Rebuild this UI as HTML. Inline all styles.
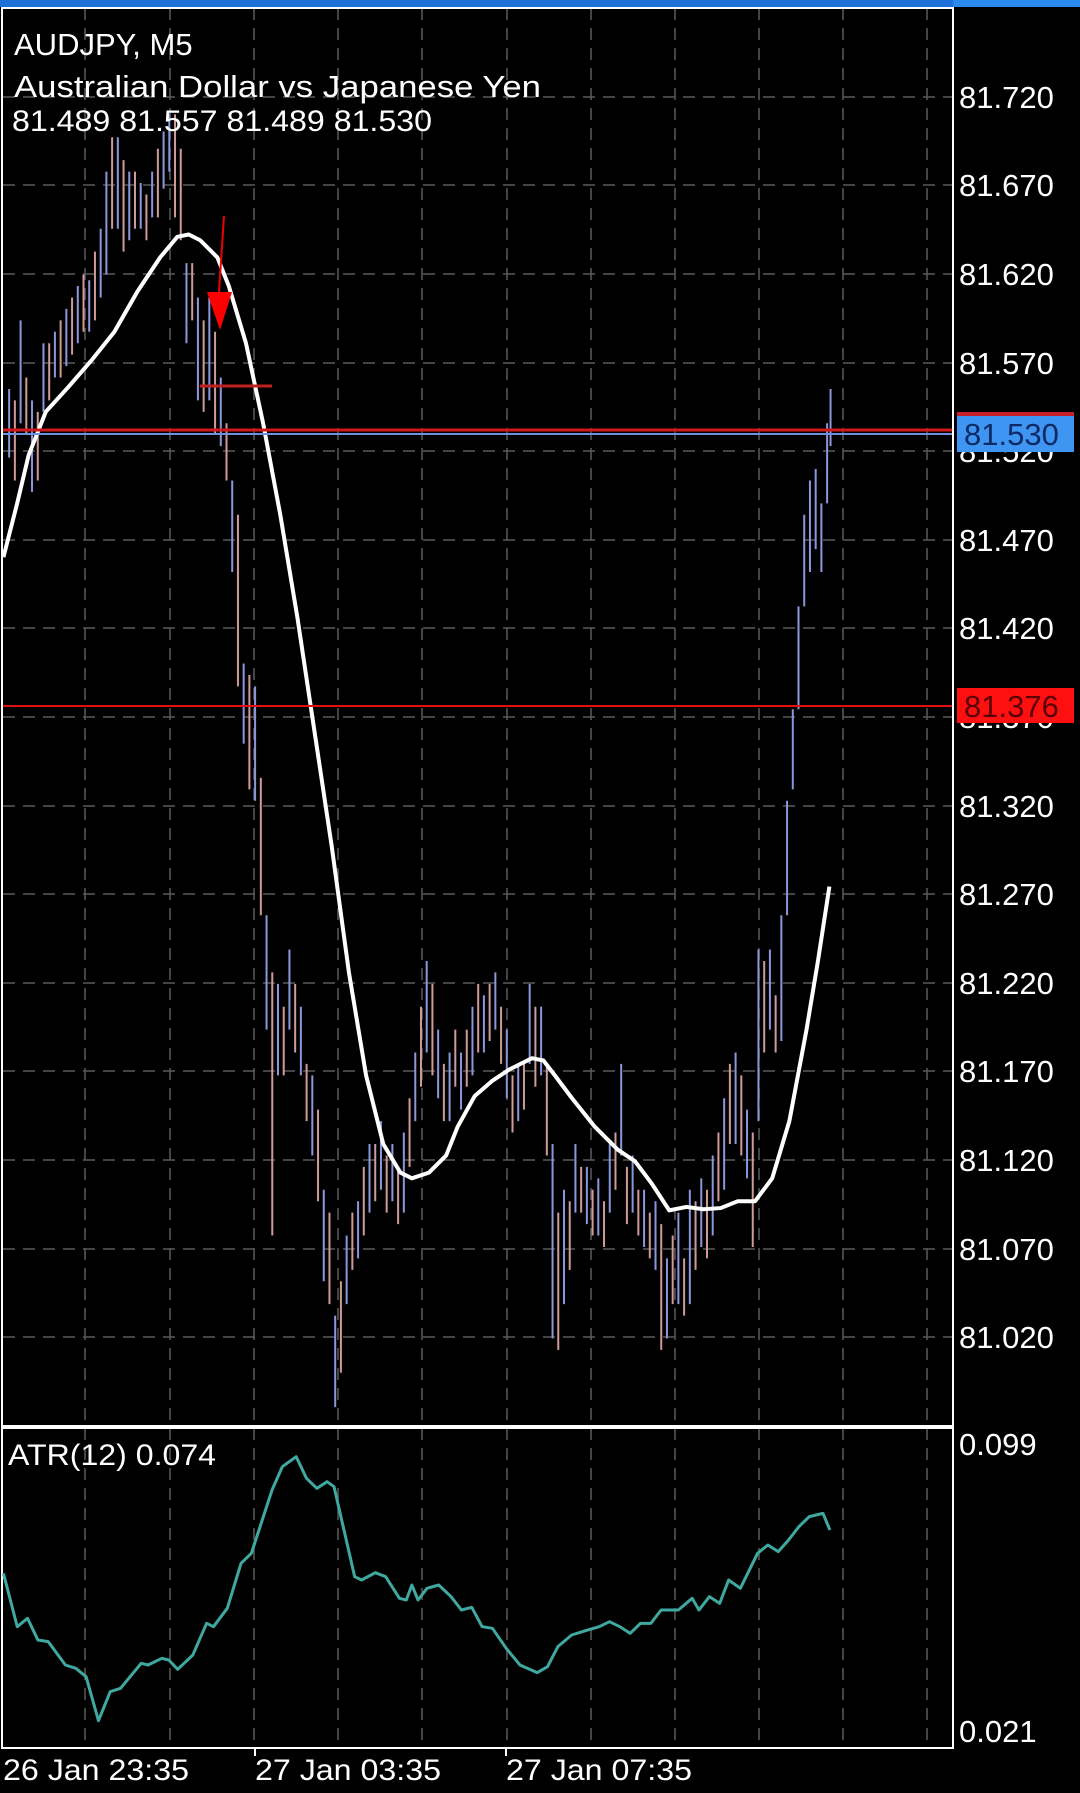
<!DOCTYPE html>
<html><head><meta charset="utf-8"><style>
html,body{margin:0;padding:0;background:#000;width:1080px;height:1793px;overflow:hidden}
svg{display:block}
text{font-family:"Liberation Sans",sans-serif;fill:#fff}
</style></head><body>
<svg width="1080" height="1793" viewBox="0 0 1080 1793" xmlns="http://www.w3.org/2000/svg">
<rect width="1080" height="1793" fill="#000"/>
<rect x="0" y="0" width="953" height="7" fill="#1f6fd8"/>
<rect x="953" y="0" width="127" height="7" fill="#2b8af0"/>
<!-- grid -->
<g stroke="#5a5a5a" stroke-width="1.5" stroke-dasharray="12 8" fill="none">
<path d="M85 8V1748M170 8V1748M254 8V1748M338 8V1748M422 8V1748M507 8V1748M591 8V1748M675 8V1748M759 8V1748M843 8V1748M927 8V1748"/>
<path d="M3 97H953M3 185H953M3 274H953M3 363H953M3 451H953M3 540H953M3 628H953M3 717H953M3 806H953M3 894H953M3 983H953M3 1071H953M3 1160H953M3 1249H953M3 1337H953"/>
</g>
<!-- candles in displayed coords -->
<g transform="scale(1.144)" fill="none">
<path vector-effect="non-scaling-stroke" stroke="#8c96dc" stroke-width="2" d="M8 340V400 M18 280V370 M28 350V430 M38 300V360 M48 290V330 M58 270V320 M68 250V300 M78 245V290 M88 200V260 M93 150V240 M103 120V200 M113 150V210 M123 160V200 M133 150V190 M143 115V165 M148 100V150 M163 230V300 M173 260V350 M183 260V350 M193 330V390 M203 420V500 M213 580V650 M223 600V700 M233 800V900 M243 860V940 M253 830V900 M263 880V940 M273 940V1010 M283 1040V1120 M293 1150V1230 M303 1080V1140 M313 1050V1100 M323 1000V1060 M333 980V1040 M343 1000V1050 M353 990V1060 M363 920V980 M373 840V920 M383 900V960 M393 920V980 M403 920V970 M413 880V940 M423 870V920 M433 850V900 M443 900V960 M453 930V980 M463 860V930 M473 880V940 M483 1000V1170 M493 1040V1140 M503 1000V1060 M513 1020V1070 M523 1030V1080 M533 1000V1060 M543 930V1010 M553 1010V1060 M563 1040V1090 M573 1050V1110 M583 1100V1170 M593 1060V1140 M603 1040V1140 M613 1030V1090 M623 1010V1080 M633 960V1040 M643 920V1000 M653 970V1030 M663 830V980 M673 830V900 M683 800V910 M688 700V800 M693 620V690 M698 530V620 M703 450V530 M708 420V500 M713 410V480 M718 440V500 M723 370V440 M726 340V390"/>
<path vector-effect="non-scaling-stroke" stroke="#d09a98" stroke-width="2" d="M13 350V420 M23 330V380 M33 360V420 M43 300V350 M53 280V330 M63 260V310 M73 240V290 M83 220V280 M98 120V200 M108 140V220 M118 150V200 M128 170V210 M138 130V190 M153 100V190 M158 130V210 M168 230V280 M178 280V360 M188 290V380 M198 370V420 M208 450V600 M218 590V690 M228 680V800 M238 850V1080 M248 880V940 M258 860V920 M268 930V980 M278 970V1050 M288 1060V1140 M298 1120V1200 M308 1060V1110 M318 1020V1080 M328 1000V1050 M338 1010V1060 M348 1020V1070 M358 960V1020 M368 880V950 M378 860V940 M388 930V980 M398 900V950 M408 900V950 M418 860V920 M428 860V910 M438 880V930 M448 940V990 M458 930V970 M468 880V950 M478 930V1010 M488 1060V1180 M498 1050V1110 M508 1020V1060 M518 1040V1080 M528 1050V1090 M538 990V1040 M548 1020V1070 M558 1040V1080 M568 1060V1100 M578 1070V1180 M588 1080V1140 M598 1100V1150 M608 1050V1110 M618 1040V1100 M628 990V1050 M638 930V1000 M648 940V1010 M658 990V1090 M668 840V920 M678 870V920"/>
<path vector-effect="non-scaling-stroke" stroke="#fff" stroke-width="4" stroke-linejoin="round" d="M3 487 L15 440 L25 398 L40 360 L60 338 L80 315 L100 290 L120 255 L140 225 L155 207 L165 205 L175 210 L190 225 L200 250 L215 300 L230 370 L245 450 L260 540 L275 640 L290 740 L305 850 L320 940 L335 1000 L350 1025 L360 1030 L375 1025 L390 1010 L400 985 L415 958 L430 945 L445 935 L465 925 L475 927 L485 940 L500 960 L520 985 L540 1005 L555 1015 L570 1035 L585 1058 L600 1055 L615 1057 L630 1056 L645 1050 L660 1050 L675 1030 L690 980 L705 900 L715 840 L725 775"/>
</g>
<!-- red marks -->
<path d="M224 216L219 292" stroke="#e00" stroke-width="2"/>
<path d="M207 292H232L220 330Z" fill="#f00"/>
<path d="M200 386H272" stroke="#c02020" stroke-width="3"/>
<!-- price lines -->
<path d="M3 430H953" stroke="#d01818" stroke-width="3"/>
<path d="M3 434H953" stroke="#7090e0" stroke-width="2"/>
<path d="M3 706H953" stroke="#e01010" stroke-width="2"/>
<!-- frame -->
<path d="M2 8H953V1748H2Z" fill="none" stroke="#fff" stroke-width="2"/>
<path d="M2 1427H953" stroke="#fff" stroke-width="4"/>
<path d="M255 1748v8M506 1748v8" stroke="#fff" stroke-width="2"/>
<!-- header -->
<text x="14" y="55" font-size="31">AUDJPY, M5</text>
<text x="14" y="97" font-size="31" textLength="527" lengthAdjust="spacingAndGlyphs">Australian Dollar vs Japanese Yen</text>
<text x="12" y="131" font-size="30" textLength="420" lengthAdjust="spacingAndGlyphs">81.489 81.557 81.489 81.530</text>
<!-- price axis -->
<g font-size="31">
<text x="959" y="108">81.720</text>
<text x="959" y="196">81.670</text>
<text x="959" y="285">81.620</text>
<text x="959" y="374">81.570</text>
<text x="959" y="462">81.520</text>
<text x="959" y="551">81.470</text>
<text x="959" y="639">81.420</text>
<text x="959" y="728">81.370</text>
<text x="959" y="817">81.320</text>
<text x="959" y="905">81.270</text>
<text x="959" y="994">81.220</text>
<text x="959" y="1082">81.170</text>
<text x="959" y="1171">81.120</text>
<text x="959" y="1260">81.070</text>
<text x="959" y="1348">81.020</text>
</g>
<rect x="957" y="412" width="117" height="5" fill="#c8202a"/>
<rect x="957" y="416" width="117" height="36" fill="#3f95f2"/>
<text x="964" y="445" font-size="31" style="fill:#0c2a66">81.530</text>
<rect x="957" y="688" width="117" height="35" fill="#ff1010"/>
<text x="964" y="717" font-size="31" style="fill:#5a0000">81.376</text>
<!-- ATR -->
<g transform="translate(0,1380) scale(0.6887,0.33333)">
<path vector-effect="non-scaling-stroke" fill="none" stroke="#3fa8a0" stroke-width="3" stroke-linejoin="round" d="M5 580 L25 740 L40 715 L55 780 L70 785 L95 855 L110 865 L125 890 L143 1022 L160 935 L175 925 L205 850 L215 855 L235 835 L245 840 L258 868 L280 825 L300 730 L310 740 L330 685 L350 550 L365 520 L395 330 L410 260 L430 230 L445 295 L460 325 L475 305 L485 320 L515 590 L525 600 L545 578 L560 590 L580 655 L590 660 L598 615 L607 660 L620 625 L637 615 L655 650 L670 690 L685 682 L700 740 L715 745 L735 805 L755 855 L780 878 L795 860 L810 800 L830 765 L850 752 L870 740 L885 725 L900 740 L915 760 L930 730 L945 730 L960 690 L985 690 L1005 655 L1015 690 L1030 650 L1045 670 L1058 600 L1075 625 L1100 520 L1115 495 L1130 515 L1145 480 L1160 440 L1175 410 L1185 405 L1195 400 L1205 450"/>
</g>
<text x="8" y="1465" font-size="30" textLength="208" lengthAdjust="spacingAndGlyphs">ATR(12) 0.074</text>
<text x="959" y="1455" font-size="31">0.099</text>
<text x="959" y="1742" font-size="31">0.021</text>
<g font-size="30">
<text x="3" y="1780" textLength="186" lengthAdjust="spacingAndGlyphs">26 Jan 23:35</text>
<text x="255" y="1780" textLength="186" lengthAdjust="spacingAndGlyphs">27 Jan 03:35</text>
<text x="506" y="1780" textLength="186" lengthAdjust="spacingAndGlyphs">27 Jan 07:35</text>
</g>
</svg>
</body></html>
